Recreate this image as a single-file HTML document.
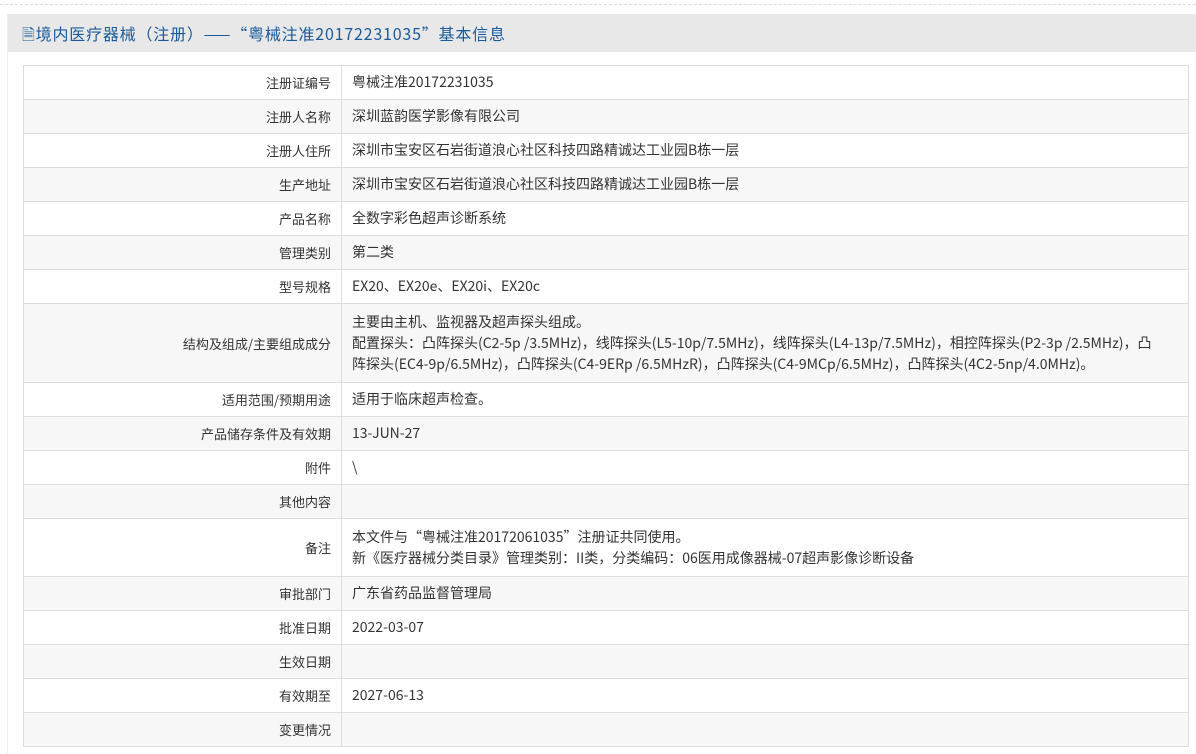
<!DOCTYPE html>
<html><head><meta charset="utf-8"><style>
body{margin:0;background:#fff;font-family:"Noto Sans CJK SC",sans-serif;width:1196px;height:745px;overflow:hidden;position:relative}
.top{position:absolute;left:0;top:0;width:1196px;height:4px;border-bottom:1px dashed #ddd}
.panel{position:absolute;left:7px;top:14px;width:1189px;height:740px;background:#fff;border-left:1px solid #eee}
.hd{height:38px;background:#e8e8e8;color:#1a5a9a;font-size:16px;letter-spacing:0.8px;line-height:38px;padding-left:14px;white-space:nowrap}
table{position:absolute;left:15px;top:51px;width:1166px;border-collapse:collapse;font-size:13px;color:#333}
td{border:1px solid #ddd;height:33px;padding:0 10px;white-space:nowrap;line-height:21px;font-size:14px}
td.l{width:297px;text-align:right;padding-right:10px;font-size:13px}
tr:nth-child(even) td{background:#f7f7f7}
</style></head><body>
<div class="top"></div>
<div class="panel">
<div class="hd">🗎境内医疗器械（注册）——“粤械注准20172231035”基本信息</div>
<table>
<tr><td class="l">注册证编号</td><td>粤械注准20172231035</td></tr>
<tr><td class="l">注册人名称</td><td>深圳蓝韵医学影像有限公司</td></tr>
<tr><td class="l">注册人住所</td><td>深圳市宝安区石岩街道浪心社区科技四路精诚达工业园B栋一层</td></tr>
<tr><td class="l">生产地址</td><td>深圳市宝安区石岩街道浪心社区科技四路精诚达工业园B栋一层</td></tr>
<tr><td class="l">产品名称</td><td>全数字彩色超声诊断系统</td></tr>
<tr><td class="l">管理类别</td><td>第二类</td></tr>
<tr><td class="l">型号规格</td><td>EX20、EX20e、EX20i、EX20c</td></tr>
<tr><td class="l" style="height:78px">结构及组成/主要组成成分</td><td>主要由主机、监视器及超声探头组成。<br>配置探头：凸阵探头(C2-5p /3.5MHz)，线阵探头(L5-10p/7.5MHz)，线阵探头(L4-13p/7.5MHz)，相控阵探头(P2-3p /2.5MHz)，凸<br>阵探头(EC4-9p/6.5MHz)，凸阵探头(C4-9ERp /6.5MHzR)，凸阵探头(C4-9MCp/6.5MHz)，凸阵探头(4C2-5np/4.0MHz)。</td></tr>
<tr><td class="l">适用范围/预期用途</td><td>适用于临床超声检查。</td></tr>
<tr><td class="l">产品储存条件及有效期</td><td>13-JUN-27</td></tr>
<tr><td class="l">附件</td><td>\</td></tr>
<tr><td class="l">其他内容</td><td></td></tr>
<tr><td class="l" style="height:57px">备注</td><td>本文件与“粤械注准20172061035”注册证共同使用。<br>新《医疗器械分类目录》管理类别：II类，分类编码：06医用成像器械-07超声影像诊断设备</td></tr>
<tr><td class="l">审批部门</td><td>广东省药品监督管理局</td></tr>
<tr><td class="l">批准日期</td><td>2022-03-07</td></tr>
<tr><td class="l">生效日期</td><td></td></tr>
<tr><td class="l">有效期至</td><td>2027-06-13</td></tr>
<tr><td class="l">变更情况</td><td></td></tr>
</table>
</div>
</body></html>
